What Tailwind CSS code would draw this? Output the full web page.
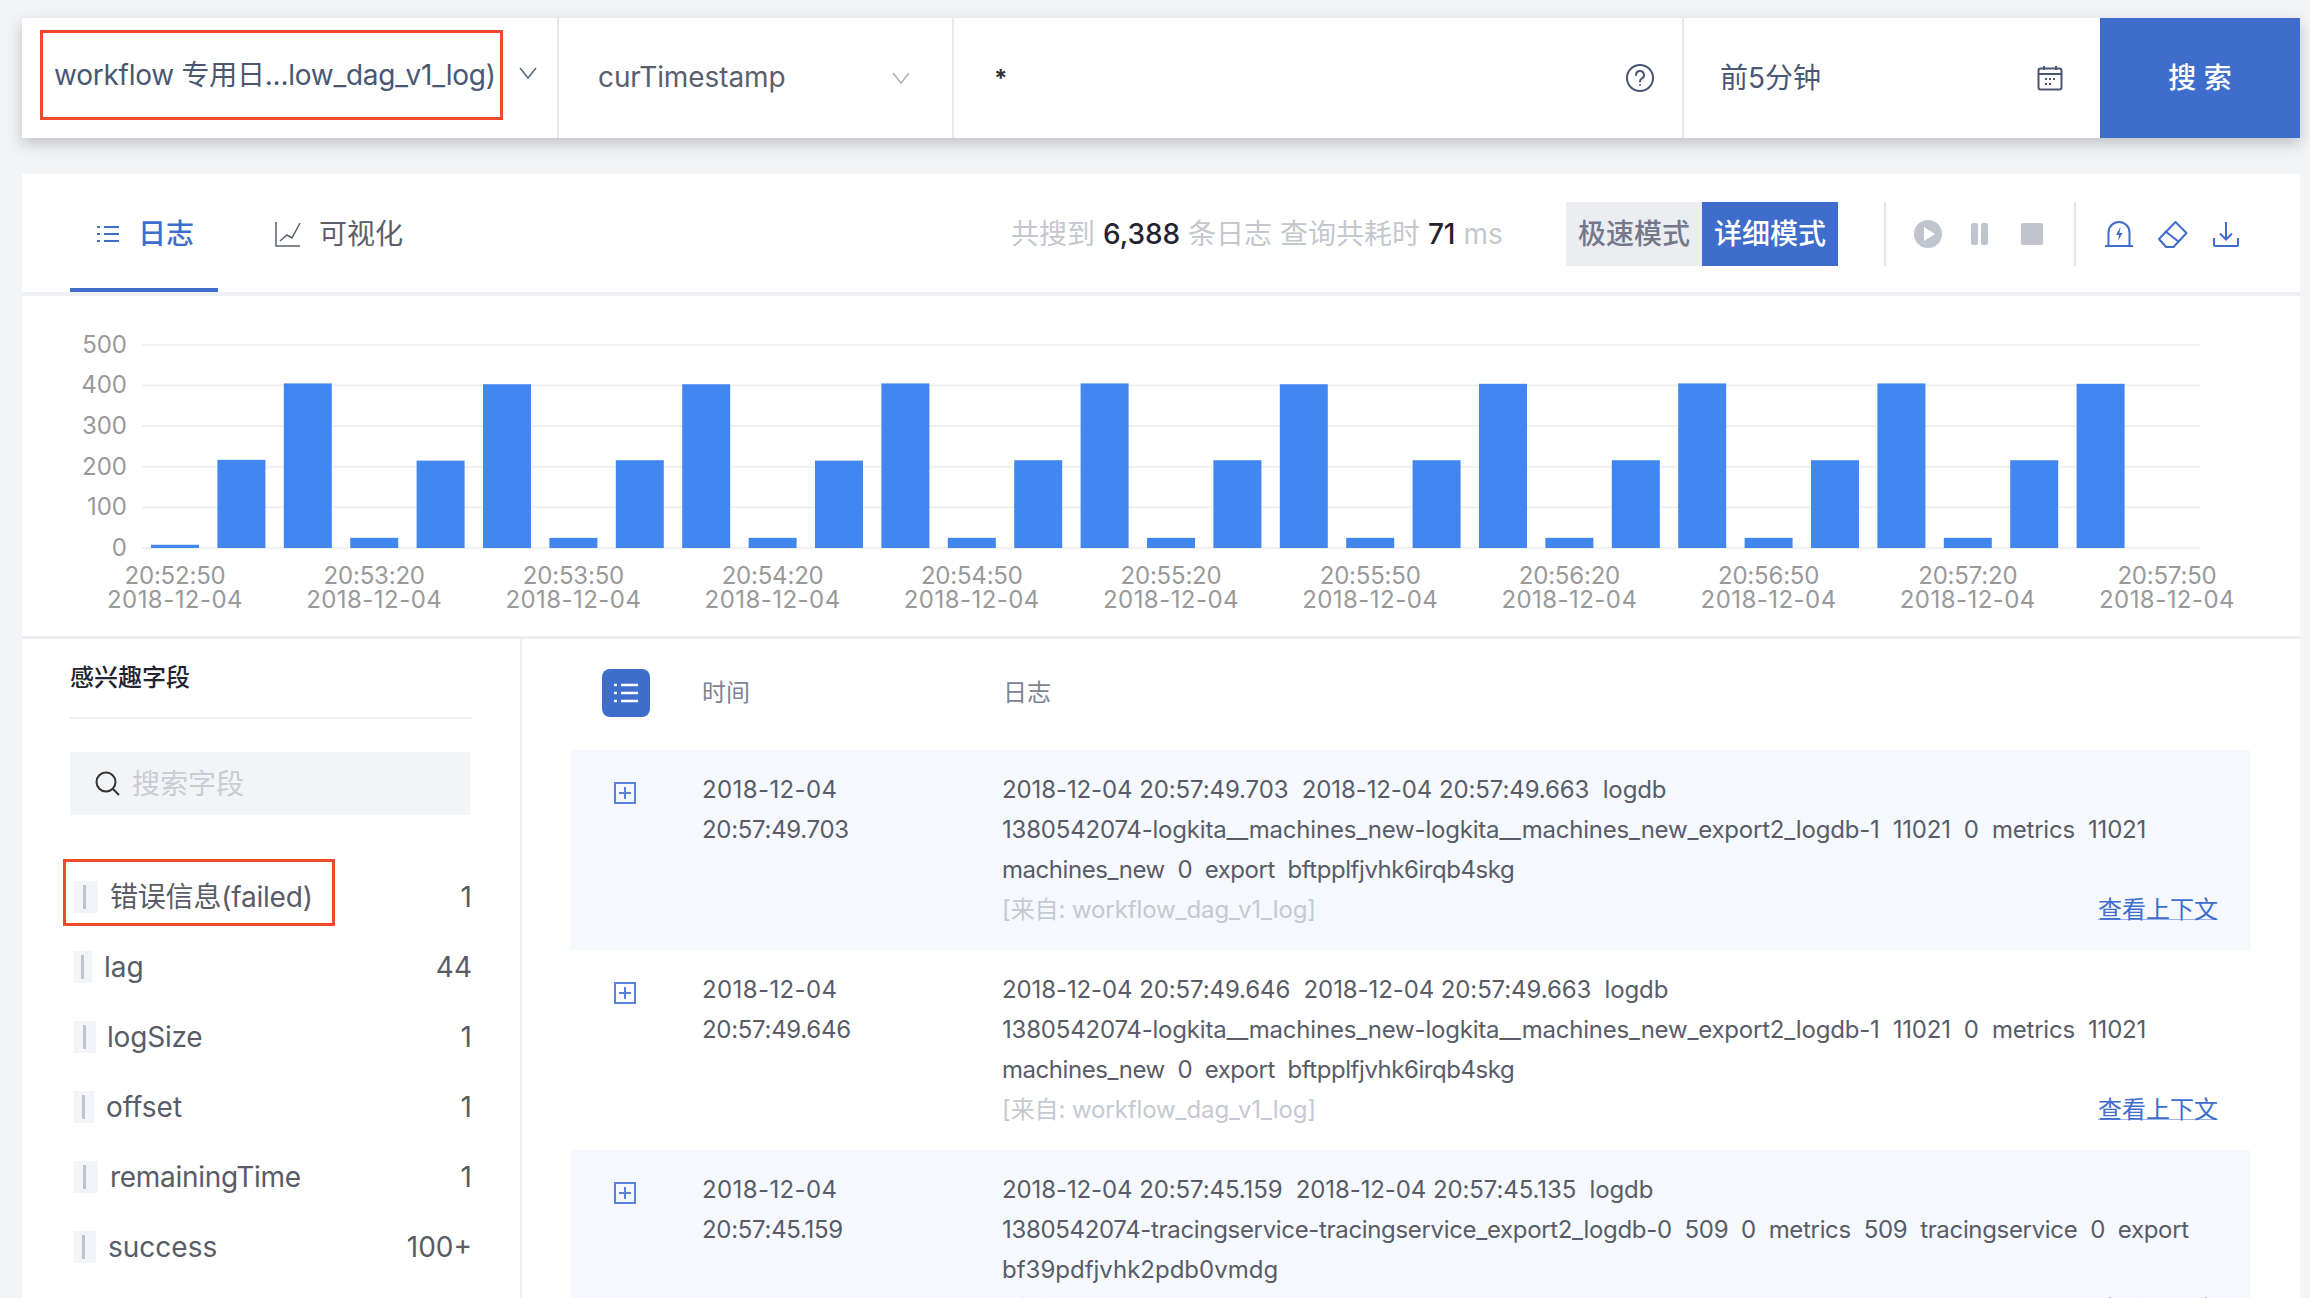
<!DOCTYPE html>
<html lang="en">
<head>
    <meta charset="UTF-8">
    <title>日志检索</title>
    <script src="https://cdn.jsdelivr.net/npm/@tailwindcss/browser@4"></script>
</head>
<body class="bg-[#f3f4f6] h-[1298px] overflow-hidden font-['Inter','Noto_Sans_CJK_SC',sans-serif] text-[#595c66]">
    <div class="ml-[22px] w-[2278px] pt-[18px]">
        <!-- search bar -->
        <div class="flex h-[120px] bg-white shadow-[0_6px_14px_rgba(60,65,80,0.28)] text-[28px] text-[#4a5773]">
            <div class="relative w-[537px] shrink-0 flex items-center border-r-2 border-[#e8e9ec]">
                <div class="ml-[18px] mt-[-6px] w-[463px] h-[90px] border-[3px] border-[#f04a2c] flex items-center pl-[11px] whitespace-nowrap tracking-[-0.25px]">workflow 专用日...low_dag_v1_log)</div>
                <svg class="absolute left-[497px] top-[49px]" width="18" height="12" viewBox="0 0 18 12" fill="none" stroke="#5b6a86" stroke-width="1.6"><path d="M1 1l8 10 8-10"/></svg>
            </div>
            <div class="w-[395px] shrink-0 flex items-center justify-between pl-[39px] pr-[42px] border-r-2 border-[#e8e9ec] text-[#595f6e]">
                <span class="mt-[-2px] tracking-[-0.1px]">curTimestamp</span>
                <svg width="18" height="12" viewBox="0 0 18 12" fill="none" stroke="#aeb3bd" stroke-width="1.6"><path d="M1 1l8 10 8-10"/></svg>
            </div>
            <div class="w-[730px] shrink-0 flex items-center justify-between pl-[40px] pr-[27px] border-r-2 border-[#e8e9ec] text-[#333]">
                <span class="mt-[2px] text-[24px] font-bold">*</span>
                <svg width="30" height="30" viewBox="0 0 30 30" fill="none" stroke="#4a5773" stroke-width="2"><circle cx="15" cy="15" r="13"/><path d="M11 12a4 4 0 1 1 6 3.4c-1.400.9-2 1.600-2 3.100" stroke-linecap="round"/><circle cx="15" cy="22" r="1" fill="#4a5773" stroke="none"/></svg>
            </div>
            <div class="w-[416px] shrink-0 flex items-center justify-between pl-[36px] pr-[37px]">
                <span>前5分钟</span>
                <svg width="26" height="26" viewBox="0 0 26 26" fill="none" stroke="#4a5773" stroke-width="2"><rect x="1.500" y="3.500" width="23" height="21" rx="2"/><path d="M1.500 9h23M7 1v4M19 1v4"/><path d="M8 14h2M12 14h2M16 14h2M8 19h2M12 19h2" stroke-width="2"/></svg>
            </div>
            <button class="w-[200px] shrink-0 bg-[#3f6dcb] text-white font-medium">搜 索</button>
        </div>

        <!-- main card -->
        <div class="mt-[36px] bg-white h-[1124px] flex flex-col">
            <!-- tabs and stats -->
            <div class="h-[122px] shrink-0 flex items-center pt-[2px] border-b-4 border-[#eef0f4] text-[28px]">
                <div class="relative self-end ml-[48px] w-[148px] h-[116px] flex items-center pl-[27px] gap-[19px] text-[#3f6dcb] font-medium">
                    <svg width="22" height="18" viewBox="0 0 22 18" fill="none" stroke="#3f6dcb" stroke-width="2"><path d="M0 2h3M7 2h15M0 9h3M7 9h15M0 16h3M7 16h15"/></svg>
                    <span>日志</span>
                    <span class="absolute left-0 bottom-0 w-[148px] h-[4px] bg-[#3f6dcb]"></span>
                </div>
                <div class="ml-[57px] flex items-center gap-[18px] text-[#5a5f6a]">
                    <svg width="26" height="26" viewBox="0 0 26 26" fill="none" stroke="#5a5f6a" stroke-width="1.500"><path d="M1 1v24h24M5 20l7-6 5 3 8-15"/></svg>
                    <span>可视化</span>
                </div>
                <div class="ml-[608px] w-[495px] whitespace-nowrap text-[#c4c7ce]">共搜到 <span class="font-medium text-[#1f2430]">6,388</span> 条日志 查询共耗时 <span class="font-medium text-[#1f2430]">71</span> ms</div>
                <div class="ml-[60px] flex h-[64px]">
                    <div class="w-[136px] bg-[#ecedf0] text-[#74788a] font-medium flex items-center justify-center">极速模式</div>
                    <div class="w-[136px] bg-[#3f6dcb] text-white font-medium flex items-center justify-center">详细模式</div>
                </div>
                <div class="ml-[46px] h-[64px] w-[192px] border-x-2 border-[#e6e7ea] flex items-center pl-[28px]">
                    <svg width="130" height="30" viewBox="0 0 130 30">
                        <circle cx="14" cy="15" r="14" fill="#c0c4cc"/><path d="M10 8l11 7-11 7z" fill="#fff"/>
                        <rect x="57" y="4" width="7" height="22" rx="2" fill="#c0c4cc"/><rect x="67" y="4" width="7" height="22" rx="2" fill="#c0c4cc"/>
                        <rect x="107" y="4" width="22" height="22" rx="2" fill="#c0c4cc"/>
                    </svg>
                </div>
                <div class="flex items-center ml-[29px] gap-[25px]">
                    <svg width="28" height="26" viewBox="0 0 28 26" fill="none" stroke="#3f6dcb" stroke-width="2"><path d="M3.500 25V11.500a10.500 10.500 0 0 1 21 0V25M0 25h28"/><path d="M15.500 6l-4.500 8h3l-1 6 4.500-8h-3z" fill="#3f6dcb" stroke="none"/></svg>
                    <svg width="30" height="27" viewBox="0 0 30 27" fill="none" stroke="#3f6dcb" stroke-width="2"><path d="M17.500 1l11 11-13 14H8L1 18z" stroke-linejoin="round"/><path d="M7 10l14 11"/></svg>
                    <svg width="26" height="26" viewBox="0 0 26 26" fill="none" stroke="#3f6dcb" stroke-width="2"><path d="M13 1v17M7 12.500l6 6 6-6M1 17v7a1 1 0 0 0 1 1h22a1 1 0 0 0 1-1v-7"/></svg>
                </div>
            </div>

            <!-- histogram -->
            <div id="chart" class="h-[343px] shrink-0 border-b-[3px] border-[#eeeff2]"></div>

            <!-- fields and log list -->
            <div class="flex flex-1 min-h-0">
                <div class="w-[500px] shrink-0 border-r-2 border-[#eeeff2] pl-[48px] pr-[48px]">
                    <div class="h-[80px] flex items-center border-b-2 border-[#eeeff2] text-[24px] font-medium text-[#1f2430]">感兴趣字段</div>
                    <div class="mt-[33px] h-[63px] w-[400px] bg-[#f3f4f6] flex items-center pl-[25px] gap-[12px] text-[28px] text-[#c8ccd4]">
                        <svg width="25" height="25" viewBox="0 0 25 25" fill="none" stroke="#333" stroke-width="2"><circle cx="11" cy="11" r="9.500"/><path d="M18 18l6 6"/></svg>
                        <span>搜索字段</span>
                    </div>
                    <div class="mt-[47px] text-[28px]">
                        <div class="relative h-[70px] flex items-center justify-between">
                            <div class="flex items-center gap-[12px] ml-[4px]"><span class="w-[24px] h-[32px] bg-[#f3f4f7] flex items-center pl-[9px]"><i class="block w-[3px] h-[24px] bg-[#c0c4cc]"></i></span><span class="tracking-[-0.2px]">错误信息(failed)</span></div><span>1</span>
                            <span class="absolute left-[-7px] top-[-3px] w-[272px] h-[67px] border-[3px] border-[#f04a2c]"></span>
                        </div>
                        <div class="h-[70px] flex items-center justify-between">
                            <div class="flex items-center gap-[12px] ml-[4px]"><span class="w-[18px] h-[32px] bg-[#f3f4f7] flex items-center pl-[7px]"><i class="block w-[3px] h-[24px] bg-[#c0c4cc]"></i></span><span>lag</span></div><span>44</span>
                        </div>
                        <div class="h-[70px] flex items-center justify-between">
                            <div class="flex items-center gap-[11px] ml-[4px]"><span class="w-[22px] h-[32px] bg-[#f3f4f7] flex items-center pl-[9px]"><i class="block w-[3px] h-[24px] bg-[#c0c4cc]"></i></span><span class="tracking-[-0.2px]">logSize</span></div><span>1</span>
                        </div>
                        <div class="h-[70px] flex items-center justify-between">
                            <div class="flex items-center gap-[12px] ml-[4px]"><span class="w-[20px] h-[32px] bg-[#f3f4f7] flex items-center pl-[8px]"><i class="block w-[3px] h-[24px] bg-[#c0c4cc]"></i></span><span>offset</span></div><span>1</span>
                        </div>
                        <div class="h-[70px] flex items-center justify-between">
                            <div class="flex items-center gap-[12px] ml-[4px]"><span class="w-[24px] h-[32px] bg-[#f3f4f7] flex items-center pl-[9px]"><i class="block w-[3px] h-[24px] bg-[#c0c4cc]"></i></span><span class="tracking-[-0.3px]">remainingTime</span></div><span>1</span>
                        </div>
                        <div class="h-[70px] flex items-center justify-between">
                            <div class="flex items-center gap-[12px] ml-[4px]"><span class="w-[22px] h-[32px] bg-[#f3f4f7] flex items-center pl-[8px]"><i class="block w-[3px] h-[24px] bg-[#c0c4cc]"></i></span><span>success</span></div><span>100+</span>
                        </div>
                    </div>
                </div>

                <div class="w-[1680px] ml-[48px] text-[24px] leading-[40px]">
                    <div class="h-[111px] flex items-center text-[#7c8494]">
                        <div class="ml-[32px] mt-[-4px] w-[48px] h-[48px] rounded-[8px] bg-[#3f6dcb] flex items-center justify-center">
                            <svg width="24" height="20" viewBox="0 0 24 20" fill="none" stroke="#fff" stroke-width="2.400"><path d="M0 2h3M7 2h17M0 10h3M7 10h17M0 18h3M7 18h17"/></svg>
                        </div>
                        <span class="ml-[52px] w-[301px] mt-[-4px]">时间</span>
                        <span class="mt-[-4px]">日志</span>
                    </div>
                    <div class="h-[200px] bg-[#f5f8fd] flex pt-[20px]">
                        <span class="ml-[44px] mt-[12px] w-[22px] h-[22px] shrink-0 border-2 border-[#5a82dc] flex items-center justify-center"><svg width="14" height="14" viewBox="0 0 14 14" stroke="#5a82dc" stroke-width="2"><path d="M7 1v12M1 7h12"/></svg></span>
                        <div class="ml-[66px] w-[300px] shrink-0"><div class="tracking-[0.4px]">2018-12-04</div><div class="tracking-[-0.3px]">20:57:49.703</div></div>
                        <div class="flex-1 min-w-0 pr-[32px]">
                            <div class="whitespace-pre tracking-[-0.1px]">2018-12-04 20:57:49.703  2018-12-04 20:57:49.663  logdb</div>
                            <div class="whitespace-pre tracking-[-0.2px]">1380542074-logkita__machines_new-logkita__machines_new_export2_logdb-1  11021  0  metrics  11021</div>
                            <div class="whitespace-pre tracking-[-0.45px]">machines_new  0  export  bftpplfjvhk6irqb4skg</div>
                            <div class="flex justify-between"><span class="text-[#c5c9d1] tracking-[-0.1px]">[来自: workflow_dag_v1_log]</span><a class="text-[#3f6dcb] underline underline-offset-[1px] decoration-1 decoration-[#3f6dcb]/50">查看上下文</a></div>
                        </div>
                    </div>
                    <div class="h-[200px] bg-white flex pt-[20px]">
                        <span class="ml-[44px] mt-[12px] w-[22px] h-[22px] shrink-0 border-2 border-[#5a82dc] flex items-center justify-center"><svg width="14" height="14" viewBox="0 0 14 14" stroke="#5a82dc" stroke-width="2"><path d="M7 1v12M1 7h12"/></svg></span>
                        <div class="ml-[66px] w-[300px] shrink-0"><div class="tracking-[0.4px]">2018-12-04</div><div class="tracking-[-0.3px]">20:57:49.646</div></div>
                        <div class="flex-1 min-w-0 pr-[32px]">
                            <div class="whitespace-pre tracking-[-0.1px]">2018-12-04 20:57:49.646  2018-12-04 20:57:49.663  logdb</div>
                            <div class="whitespace-pre tracking-[-0.2px]">1380542074-logkita__machines_new-logkita__machines_new_export2_logdb-1  11021  0  metrics  11021</div>
                            <div class="whitespace-pre tracking-[-0.45px]">machines_new  0  export  bftpplfjvhk6irqb4skg</div>
                            <div class="flex justify-between"><span class="text-[#c5c9d1] tracking-[-0.1px]">[来自: workflow_dag_v1_log]</span><a class="text-[#3f6dcb] underline underline-offset-[1px] decoration-1 decoration-[#3f6dcb]/50">查看上下文</a></div>
                        </div>
                    </div>
                    <div class="h-[200px] bg-[#f5f8fd] flex pt-[20px]">
                        <span class="ml-[44px] mt-[12px] w-[22px] h-[22px] shrink-0 border-2 border-[#5a82dc] flex items-center justify-center"><svg width="14" height="14" viewBox="0 0 14 14" stroke="#5a82dc" stroke-width="2"><path d="M7 1v12M1 7h12"/></svg></span>
                        <div class="ml-[66px] w-[300px] shrink-0"><div class="tracking-[0.4px]">2018-12-04</div><div class="tracking-[-0.3px]">20:57:45.159</div></div>
                        <div class="flex-1 min-w-0 pr-[32px]">
                            <div class="whitespace-pre tracking-[-0.1px]">2018-12-04 20:57:45.159  2018-12-04 20:57:45.135  logdb</div>
                            <div class="whitespace-pre tracking-[-0.33px]">1380542074-tracingservice-tracingservice_export2_logdb-0  509  0  metrics  509  tracingservice  0  export</div>
                            <div class="whitespace-pre">bf39pdfjvhk2pdb0vmdg</div>
                            <div class="flex justify-between"><span class="text-[#c5c9d1] tracking-[-0.1px]">[来自: workflow_dag_v1_log]</span><a class="text-[#3f6dcb] underline underline-offset-[1px] decoration-1 decoration-[#3f6dcb]/50">查看上下文</a></div>
                        </div>
                    </div>
                </div>
            </div>
        </div>
    </div>

    <script>
        // Histogram: counts per 10s bucket, drawn in a 2278x340 box that starts at page x=22, y=296
        const counts = [8, 217, 405, 25, 215, 403, 25, 216, 403, 25, 215, 405, 25, 216, 405, 25, 216, 403, 25, 216, 404, 25, 216, 405, 25, 216, 405, 25, 216, 404];
        const times = ['20:52:50', '20:53:20', '20:53:50', '20:54:20', '20:54:50', '20:55:20', '20:55:50', '20:56:20', '20:56:50', '20:57:20', '20:57:50'];
        const baseY = 252, perUnit = 0.4064, stepX = 66.4, firstX = 129;
        let svg = '<svg width="2278" height="340" font-size="24" fill="#999">';
        [0, 100, 200, 300, 400, 500].forEach(v => {
            const y = baseY - v * perUnit;
            svg += `<rect x="120" y="${y - 1}" width="2058" height="2" fill="#f0f0f2"/>`;
            svg += `<text x="105" y="${y + 8}" text-anchor="end">${v}</text>`;
        });
        counts.forEach((c, i) => {
            const h = c * perUnit;
            svg += `<rect x="${firstX + i * stepX}" y="${baseY - h}" width="48" height="${h}" fill="#4286f0"/>`;
        });
        times.forEach((t, i) => {
            const x = 153 + i * stepX * 3;
            svg += `<text x="${x}" y="288" text-anchor="middle" letter-spacing="-0.2">${t}</text>`;
            svg += `<text x="${x}" y="312" text-anchor="middle" letter-spacing="0.45">2018-12-04</text>`;
        });
        document.getElementById('chart').innerHTML = svg + '</svg>';
    </script>
</body>
</html>
